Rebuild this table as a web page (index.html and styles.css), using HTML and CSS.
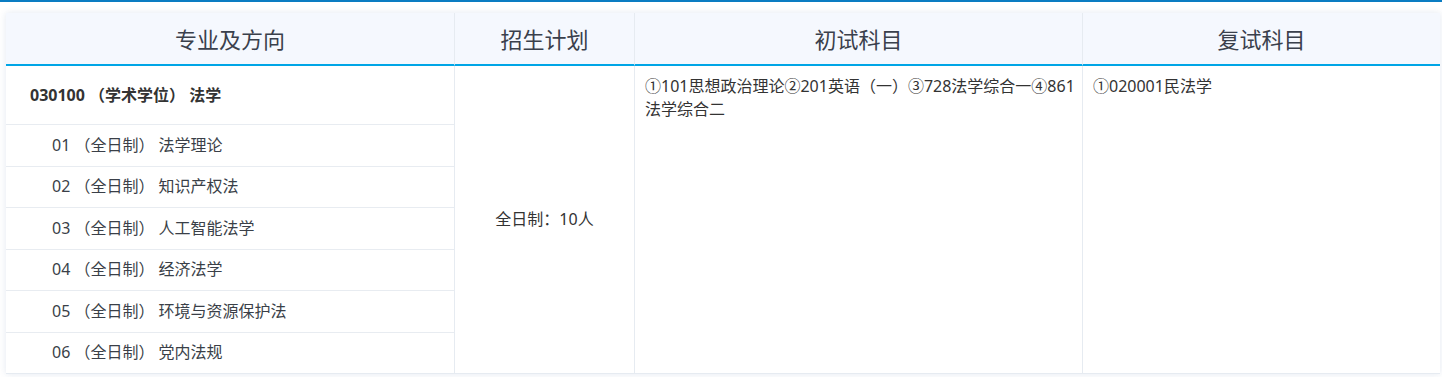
FILE: index.html
```html
<!DOCTYPE html>
<html lang="zh-CN">
<head>
<meta charset="utf-8">
<title>招生专业目录</title>
<link rel="stylesheet" href="styles.css">
</head>
<body>
<div class="topline"></div>
<div class="wrap">
  <div class="table">
    <div class="th">专业及方向</div>
    <div class="th">招生计划</div>
    <div class="th">初试科目</div>
    <div class="th last">复试科目</div>

    <div class="td major">
      <div class="major-title">030100 （学术学位） 法学</div>
      <div class="dir">01 （全日制） 法学理论</div>
      <div class="dir">02 （全日制） 知识产权法</div>
      <div class="dir">03 （全日制） 人工智能法学</div>
      <div class="dir">04 （全日制） 经济法学</div>
      <div class="dir">05 （全日制） 环境与资源保护法</div>
      <div class="dir">06 （全日制） 党内法规</div>
    </div>
    <div class="td plan">全日制：10人</div>
    <div class="td subj">①101思想政治理论②201英语（一）③728法学综合一④861法学综合二</div>
    <div class="td subj last">①020001民法学</div>
  </div>
</div>
</body>
</html>
```

FILE: styles.css
```css
html, body {
  margin: 0;
  padding: 0;
  background: #ffffff;
}
body {
  font-family: "Noto Sans", "Noto Sans CJK SC", sans-serif;
  color: #333;
  width: 1442px;
  height: 377px;
  overflow: hidden;
}
.topline {
  height: 2px;
  background: #0a7cc2;
}
.wrap {
  padding: 11px 2px 0 6px;
}
.table {
  display: grid;
  grid-template-columns: 449px 180px 448px 1fr;
  grid-template-rows: 53px 308px;
  background: #fff;
  box-shadow: 0 0 7px rgba(40, 80, 140, 0.13);
}
.th {
  background: #f5f8fe;
  border-bottom: 2px solid #00a5e6;
  border-right: 1px solid #e6ebf1;
  font-size: 22px;
  line-height: 30px;
  color: #3a404c;
  display: flex;
  align-items: center;
  justify-content: center;
}
.th.last, .td.last {
  border-right: none;
}
.td {
  border-right: 1px solid #e6ebf1;
  border-bottom: 1px solid #e6ebf1;
  font-size: 16px;
  line-height: 23px;
}
.major {
  display: grid;
  grid-template-rows: 58px repeat(6, 1fr);
}
.major-title {
  font-weight: bold;
  padding-left: 24px;
  display: flex;
  align-items: center;
  color: #333;
}
.dir {
  border-top: 1px solid #e8ecf1;
  padding-left: 46px;
  display: flex;
  align-items: center;
  color: #3a3f48;
}
.plan {
  display: flex;
  align-items: center;
  justify-content: center;
  color: #333;
}
.subj {
  padding: 9px 6px 0 10px;
  color: #333;
}
```
